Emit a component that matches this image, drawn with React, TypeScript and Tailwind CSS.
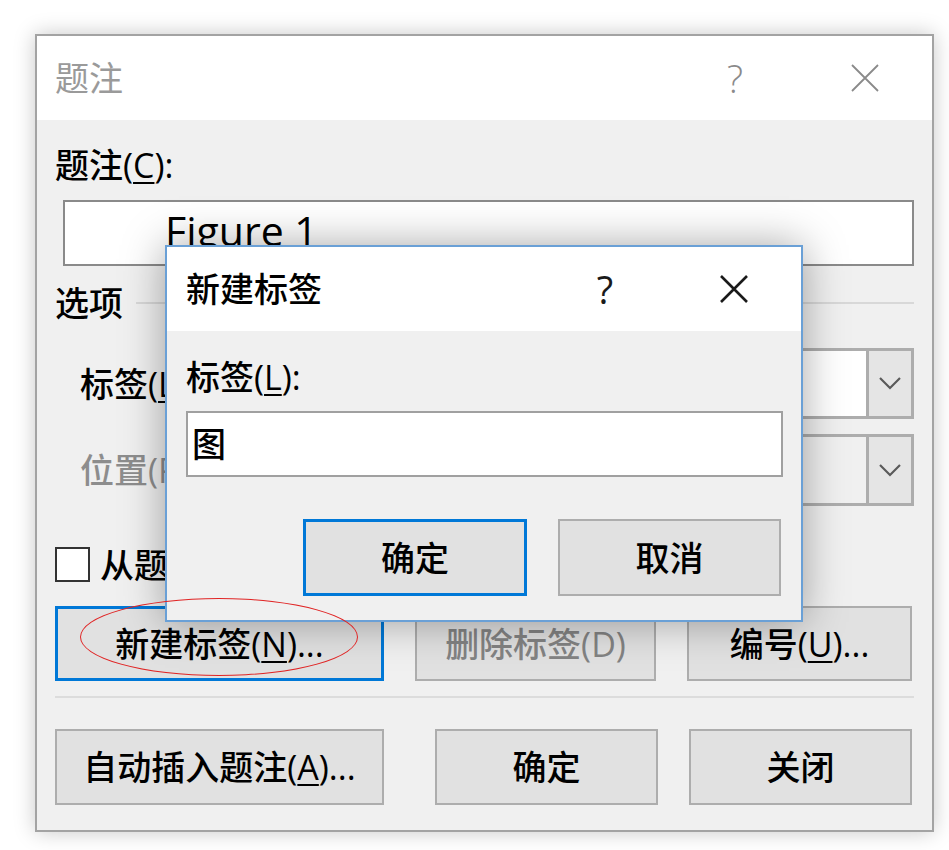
import React from 'react';

function CloseIcon({ color, width }: { color: string; width: number }) {
  return (
    <svg width="28" height="28" viewBox="0 0 28 28" fill="none">
      <path d="M1 1L27 27M27 1L1 27" stroke={color} strokeWidth={width} />
    </svg>
  );
}

function Chevron() {
  return (
    <svg width="22" height="13" viewBox="0 0 22 13" fill="none">
      <polyline points="1,1 11,11 21,1" stroke="#5a5a5a" strokeWidth="2.2" />
    </svg>
  );
}

function Combo({ disabled }: { disabled?: boolean }) {
  return (
    <div className="flex flex-1 border-[3px] border-[#adadad]">
      <div className={disabled ? 'flex-1 bg-[#f0f0f0]' : 'flex-1 bg-white'}></div>
      <div className="w-[45px] border-l-[3px] border-[#adadad] bg-[#e5e5e5] flex items-center justify-center">
        <Chevron />
      </div>
    </div>
  );
}

function Button({
  children,
  className,
  focused,
  disabled,
}: {
  children: React.ReactNode;
  className: string;
  focused?: boolean;
  disabled?: boolean;
}) {
  return (
    <div
      className={
        'flex items-center justify-center bg-[#e1e1e1] leading-[40px] ' +
        (focused ? 'border-[3px] border-[#0078d7] ' : 'border-2 border-[#adadad] ') +
        (disabled ? 'text-[#838383] ' : 'text-black ') +
        className
      }
    >
      {children}
    </div>
  );
}

function NewLabelDialog() {
  return (
    <div className="absolute left-[128px] top-[209px] w-[638px] h-[377px] border-2 border-[#6aa0d6] bg-[#f0f0f0] shadow-[0_0_40px_rgba(0,0,0,0.35)] flex flex-col z-10">
      <div className="h-[84px] bg-white flex items-center pl-[19px]">
        <span className="flex-1 leading-[40px] text-black">新建标签</span>
        <span className="w-[30px] text-center text-[38px] leading-[40px] text-[#1a1a1a] font-['Open_Sans',sans-serif]">?</span>
        <span className="ml-[100px] mr-[53px] flex">
          <CloseIcon color="#1a1a1a" width={2.6} />
        </span>
      </div>
      <div className="flex-1 flex flex-col pl-[19px] pr-[18px] pt-[26px]">
        <div className="leading-[40px] text-black">
          标签(<span className="underline underline-offset-4 decoration-2">L</span>):
        </div>
        <div className="mt-[14px] h-[66px] border-2 border-[#a0a0a0] bg-white flex items-center pl-[4px] leading-[40px]">
          图
        </div>
        <div className="mt-[42px] flex justify-end gap-[31px] pr-[2px]">
          <Button focused className="w-[224px] h-[77px]">确定</Button>
          <Button className="w-[223px] h-[77px]">取消</Button>
        </div>
      </div>
    </div>
  );
}

export default function App() {
  return (
    <div className="min-h-[850px] bg-white pt-[34px] pl-[35px] font-['Open_Sans','Noto_Sans_CJK_SC',sans-serif] font-medium text-[34px]">
      <div className="relative w-[899px] h-[798px] border-2 border-[#a3a3a3] bg-[#f0f0f0] shadow-[0_0_20px_rgba(0,0,0,0.22)] flex flex-col">
        <div className="h-[84px] bg-white flex items-center pl-[18px]">
          <span className="flex-1 leading-[40px] text-[#9a9a9a] font-normal">题注</span>
          <span className="w-[30px] text-center text-[38px] leading-[40px] text-[#8a8a8a] font-['Open_Sans',sans-serif] font-light">?</span>
          <span className="ml-[101px] mr-[53px] flex">
            <CloseIcon color="#8a8a8a" width={1.8} />
          </span>
        </div>

        <div className="flex-1 flex flex-col px-[18px] pt-[25px]">
          <div className="leading-[40px] text-black">
            题注(<span className="underline underline-offset-4 decoration-2">C</span>):
          </div>
          <div className="mt-[15px] ml-[8px] h-[66px] border-2 border-[#8a8a8a] bg-white overflow-hidden pl-[100px] pt-[6px]">
            <span className="font-['Open_Sans',sans-serif] font-normal text-[41px] leading-[40px] text-black">Figure 1</span>
          </div>

          <div className="mt-[17px] flex items-center">
            <span className="leading-[40px] text-black">选项</span>
            <div className="flex-1 ml-[13px] h-[2px] bg-[#d8d8d8]"></div>
          </div>

          <div className="mt-[25px] h-[71px] flex items-center">
            <span className="w-[245px] pl-[25px] leading-[40px] text-black">
              标签(<span className="underline underline-offset-4 decoration-2">L</span>):
            </span>
            <div className="flex-1 h-full flex">
              <Combo />
            </div>
          </div>

          <div className="mt-[15px] h-[72px] flex items-center">
            <span className="w-[245px] pl-[25px] leading-[40px] text-[#8d8d8d]">位置(P):</span>
            <div className="flex-1 h-full flex">
              <Combo disabled />
            </div>
          </div>

          <div className="mt-[41px] h-[35px] flex items-center gap-[10px]">
            <div className="w-[35px] h-[35px] border-2 border-[#333333] bg-white"></div>
            <span className="leading-[40px] text-black">从题注中排除标签(E)</span>
          </div>

          <div className="mt-[24px] flex gap-[31px]">
            <Button focused className="w-[329px] h-[75px]">
              新建标签(<span className="underline underline-offset-4 decoration-2">N</span>)...
            </Button>
            <Button disabled className="w-[241px] h-[75px]">删除标签(D)</Button>
            <Button className="w-[225px] h-[75px]">
              编号(<span className="underline underline-offset-4 decoration-2">U</span>)...
            </Button>
          </div>

          <div className="mt-[15px] h-[2px] bg-[#dcdcdc]"></div>

          <div className="mt-[31px] flex">
            <Button className="w-[329px] h-[76px]">
              自动插入题注(<span className="underline underline-offset-4 decoration-2">A</span>)...
            </Button>
            <Button className="ml-[51px] w-[223px] h-[76px]">确定</Button>
            <Button className="ml-[31px] w-[223px] h-[76px]">关闭</Button>
          </div>
        </div>

        <NewLabelDialog />

        <div className="absolute left-[43px] top-[562px] w-[278px] h-[78px] rounded-[50%] border-[1.5px] border-[#e02424] z-20 pointer-events-none"></div>
      </div>
    </div>
  );
}
